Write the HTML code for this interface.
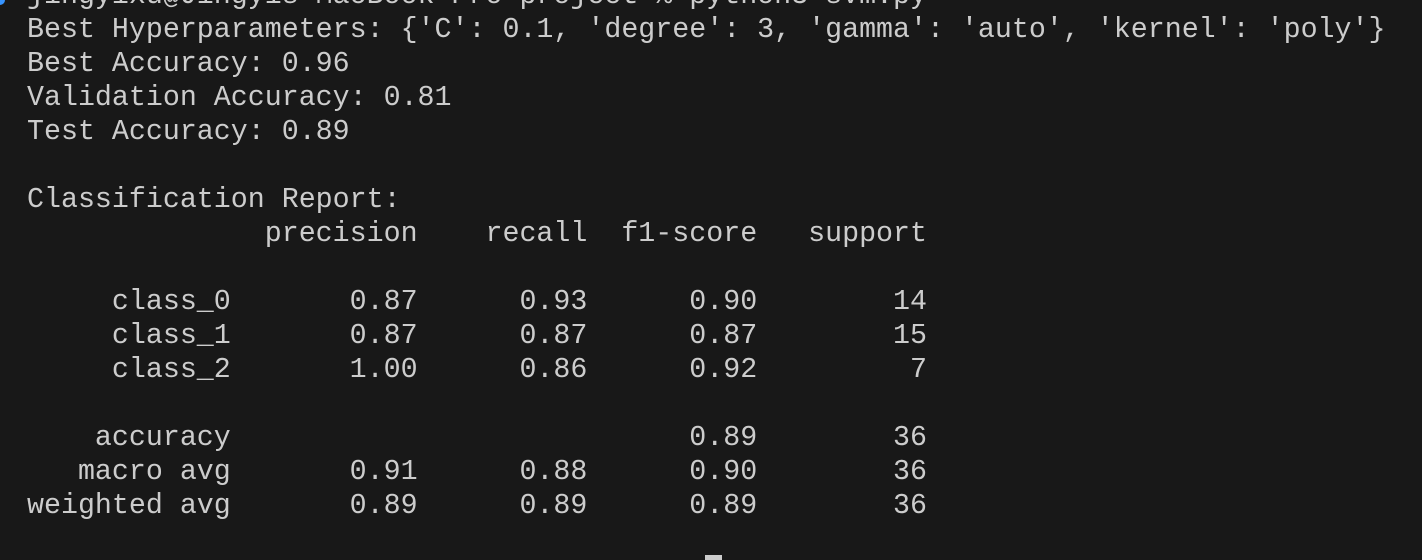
<!DOCTYPE html>
<html><head><style>
html,body{margin:0;padding:0;background:#181818;width:1422px;height:560px;overflow:hidden}
#w{position:relative;width:1422px;height:560px;overflow:hidden}
pre{position:absolute;left:27px;top:-21px;margin:0;font-family:"Liberation Mono",monospace;font-size:28.3px;line-height:34px;color:#cccccc;letter-spacing:0}
.dot{position:absolute;left:-5px;top:-5px;width:10px;height:10px;border-radius:50%;background:#3794ff}
.cur{display:inline-block;width:17px;height:30px;background:#cccccc;vertical-align:-3px;margin-left:16px}
.last{position:relative;top:-2px}
</style></head><body><div id="w">
<div class="dot"></div>
<pre>jingyixu@Jingyis-MacBook-Pro project % python3 svm.py
Best Hyperparameters: {'C': 0.1, 'degree': 3, 'gamma': 'auto', 'kernel': 'poly'}
Best Accuracy: 0.96
Validation Accuracy: 0.81
Test Accuracy: 0.89

Classification Report:
              precision    recall  f1-score   support

     class_0       0.87      0.93      0.90        14
     class_1       0.87      0.87      0.87        15
     class_2       1.00      0.86      0.92         7

    accuracy                           0.89        36
   macro avg       0.91      0.88      0.90        36
weighted avg       0.89      0.89      0.89        36

<span class="last">jingyixu@Jingyis-MacBook-Pro project % <span class="cur"></span></span></pre>
</div></body></html>
